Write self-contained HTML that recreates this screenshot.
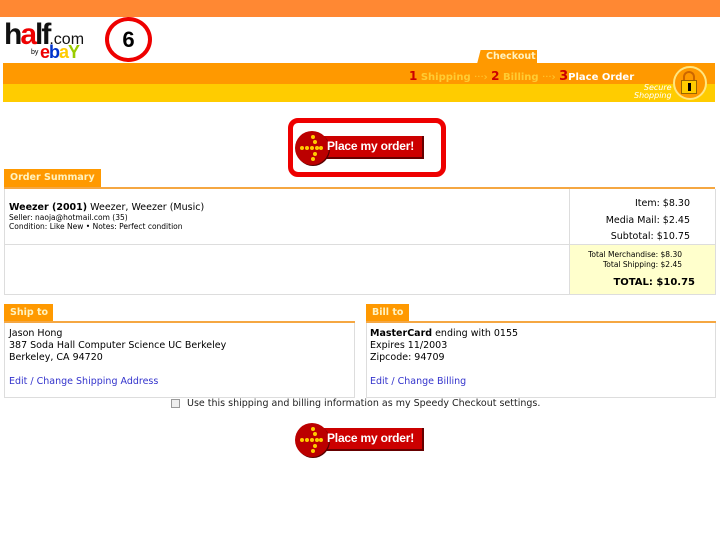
<!DOCTYPE html>
<html><head><meta charset="utf-8"><style>
*{margin:0;padding:0;box-sizing:border-box}
body{width:720px;height:540px;background:#fff;position:relative;overflow:hidden;font-family:"DejaVu Sans","Liberation Sans",sans-serif;color:#000}
.a{position:absolute;white-space:nowrap}
.tab{position:absolute;background:#f90;color:#fff3c0;font-weight:bold;font-size:9.5px;padding:3px 0 0 6px}
.line{position:absolute;height:2px;background:#f5a742}
.box{position:absolute;border:1px solid #ddd;border-top:none}
.btn{position:absolute;width:130px;height:34px}
.btn .bar{position:absolute;left:18px;top:5px;width:111px;height:23px;background:#c00;border-right:2px solid #600;border-bottom:2px solid #600}
.btn .c{position:absolute;left:0;top:0;width:34px;height:34px;border-radius:50%;background:#b00;box-shadow:1px 1px 0 #500}
.btn .t{position:absolute;left:32px;top:8px;color:#fff;font:bold 12px "Liberation Sans",sans-serif;letter-spacing:-0.2px}
.d{position:absolute;width:4px;height:4px;border-radius:50%;background:#fc0}
a{color:#33c}
</style></head><body>
<div class="a" style="left:0;top:0;width:720px;height:17px;background:#ff8833"></div>
<!-- logo -->
<div class="a" style="left:4px;top:18px;font:bold 30px 'Liberation Sans',sans-serif;letter-spacing:-2px;color:#111">h<span style="color:#e00">a</span>lf<span style="font-weight:normal;font-size:16px;letter-spacing:0">.com</span></div>
<div class="a" style="left:31px;top:49px;font:7px sans-serif">by</div>
<div class="a" style="left:40px;top:42px;font:bold 18px 'Liberation Sans',sans-serif;letter-spacing:-1px"><span style="color:#e00">e</span><span style="color:#03c">b</span><span style="color:#fc0">a</span><span style="color:#9c0">Y</span></div>
<!-- circle 6 -->
<div class="a" style="left:105px;top:17px;width:47px;height:45px;border:4px solid #e00;border-radius:50%;text-align:center;font:bold 22px 'Liberation Sans',sans-serif;line-height:37px">6</div>
<!-- bands -->
<div class="a" style="left:477px;top:50px;width:60px;height:14px;background:#f90;clip-path:polygon(6% 0,100% 0,100% 100%,0 100%)"></div>
<div class="a" style="left:486px;top:51px;font:bold 9.5px 'DejaVu Sans',sans-serif;color:#fff3c0">Checkout</div>
<div class="a" style="left:3px;top:63px;width:712px;height:21px;background:#f90"></div>
<div class="a" style="left:3px;top:84px;width:712px;height:18px;background:#fc0"></div>
<div class="a" style="left:409px;top:69px;font:bold 10px 'DejaVu Sans',sans-serif;color:#fc3"><span style="color:#c00;font-size:12px">1</span> Shipping <span style="font-weight:normal">···›</span> <span style="color:#c00;font-size:12px">2</span> Billing <span style="font-weight:normal">···›</span> <span style="color:#c00;font-size:13px">3</span><span style="color:#fff">Place Order</span></div>
<div class="a" style="left:634px;top:84px;font:italic 8px 'DejaVu Sans',sans-serif;color:#fff;line-height:8px;text-align:right">&nbsp;Secure<br>Shopping</div>
<div class="a" style="left:673px;top:66px;width:34px;height:34px;border-radius:50%;border:2px solid #ffe680;background:#f90"></div>
<div class="a" style="left:683px;top:71px;width:12px;height:10px;border:2px solid #c60;border-bottom:none;border-radius:6px 6px 0 0"></div>
<div class="a" style="left:681px;top:80px;width:16px;height:14px;background:#fc0;border:1px solid #960"></div>
<div class="a" style="left:688px;top:83px;width:3px;height:8px;background:#000"></div>
<!-- button 1 -->
<div class="a" style="left:288px;top:118px;width:158px;height:59px;border:5px solid #e00;border-radius:10px"></div>
<div class="btn" style="left:295px;top:131px"><div class="bar"></div><div class="c"></div>
<div class="d" style="left:5px;top:15px"></div><div class="d" style="left:10px;top:15px"></div><div class="d" style="left:15px;top:15px"></div><div class="d" style="left:20px;top:15px"></div><div class="d" style="left:18px;top:9px"></div><div class="d" style="left:16px;top:4px"></div><div class="d" style="left:18px;top:21px"></div><div class="d" style="left:16px;top:26px"></div><div class="d" style="left:24px;top:15px"></div>
<div class="t">Place my order!</div></div>
<!-- order summary -->
<div class="tab" style="left:4px;top:169px;width:97px;height:19px">Order Summary</div>
<div class="line" style="left:4px;top:187px;width:711px"></div>
<div class="box" style="left:4px;top:189px;width:712px;height:106px"></div>
<div class="a" style="left:569px;top:189px;width:1px;height:105px;background:#ddd"></div>
<div class="a" style="left:5px;top:244px;width:710px;height:1px;background:#ddd"></div>
<div class="a" style="left:570px;top:245px;width:145px;height:49px;background:#ffffcc"></div>
<div class="a" style="left:9px;top:202px;font-size:9.5px"><b>Weezer (2001)</b> Weezer, Weezer (Music)</div>
<div class="a" style="left:9px;top:213px;font-size:7.5px">Seller: naoja@hotmail.com (35)</div>
<div class="a" style="left:9px;top:222px;font-size:7.5px">Condition: Like New • Notes: Perfect condition</div>
<div class="a" style="left:560px;top:196px;width:130px;text-align:right;font-size:9.5px;line-height:16.5px">Item: $8.30<br>Media Mail: $2.45<br>Subtotal: $10.75</div>
<div class="a" style="left:560px;top:250px;width:122px;text-align:right;font-size:7.5px;line-height:10px">Total Merchandise: $8.30<br>Total Shipping: $2.45</div>
<div class="a" style="left:560px;top:277px;width:135px;text-align:right;font-size:10px;font-weight:bold">TOTAL: $10.75</div>
<!-- ship / bill -->
<div class="tab" style="left:4px;top:304px;width:49px;height:18px">Ship to</div>
<div class="line" style="left:4px;top:321px;width:351px"></div>
<div class="box" style="left:4px;top:323px;width:351px;height:75px"></div>
<div class="tab" style="left:366px;top:304px;width:43px;height:18px">Bill to</div>
<div class="line" style="left:366px;top:321px;width:350px"></div>
<div class="box" style="left:366px;top:323px;width:350px;height:75px"></div>
<div class="a" style="left:9px;top:328px;font-size:9.5px;line-height:12px">Jason Hong<br>387 Soda Hall Computer Science UC Berkeley<br>Berkeley, CA 94720</div>
<div class="a" style="left:9px;top:376px;font-size:9.5px"><a>Edit / Change Shipping Address</a></div>
<div class="a" style="left:370px;top:328px;font-size:9.5px;line-height:12px"><b>MasterCard</b> ending with 0155<br>Expires 11/2003<br>Zipcode: 94709</div>
<div class="a" style="left:370px;top:376px;font-size:9.5px"><a>Edit / Change Billing</a></div>
<div class="a" style="left:171px;top:399px;width:9px;height:9px;border:1px solid #999;background:#eee"></div>
<div class="a" style="left:187px;top:398px;font-size:9.5px;color:#222">Use this shipping and billing information as my Speedy Checkout settings.</div>
<!-- button 2 -->
<div class="btn" style="left:295px;top:423px"><div class="bar"></div><div class="c"></div>
<div class="d" style="left:5px;top:15px"></div><div class="d" style="left:10px;top:15px"></div><div class="d" style="left:15px;top:15px"></div><div class="d" style="left:20px;top:15px"></div><div class="d" style="left:18px;top:9px"></div><div class="d" style="left:16px;top:4px"></div><div class="d" style="left:18px;top:21px"></div><div class="d" style="left:16px;top:26px"></div><div class="d" style="left:24px;top:15px"></div>
<div class="t">Place my order!</div></div>
</body></html>
